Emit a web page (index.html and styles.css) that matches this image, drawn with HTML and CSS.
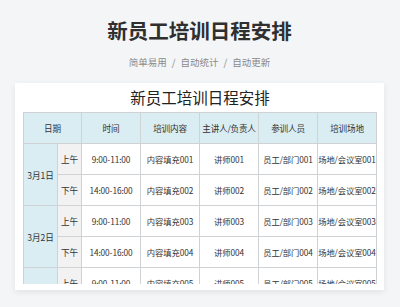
FILE: index.html
```html
<!DOCTYPE html>
<html lang="zh">
<head>
<meta charset="utf-8">
<link rel="stylesheet" href="styles.css">
</head>
<body>
<div class="page">
  <h1 class="title">新员工培训日程安排</h1>
  <p class="subtitle">简单易用<span class="sep">/</span>自动统计<span class="sep">/</span>自动更新</p>
  <div class="card">
    <div class="card-title">新员工培训日程安排</div>
    <div class="table-wrap">
      <table class="sheet">
        <colgroup>
          <col class="c-date"><col class="c-half"><col class="c-n"><col class="c-n"><col class="c-n"><col class="c-n"><col class="c-n">
        </colgroup>
        <thead>
          <tr><th colspan="2">日期</th><th>时间</th><th>培训内容</th><th>主讲人/负责人</th><th>参训人员</th><th>培训场地</th></tr>
        </thead>
        <tbody>
          <tr><td rowspan="2" class="date">3月1日</td><td class="half">上午</td><td>9:00-11:00</td><td>内容填充001</td><td>讲师001</td><td>员工/部门001</td><td>场地/会议室001</td></tr>
          <tr><td class="half">下午</td><td>14:00-16:00</td><td>内容填充002</td><td>讲师002</td><td>员工/部门002</td><td>场地/会议室002</td></tr>
          <tr><td rowspan="2" class="date">3月2日</td><td class="half">上午</td><td>9:00-11:00</td><td>内容填充003</td><td>讲师003</td><td>员工/部门003</td><td>场地/会议室003</td></tr>
          <tr><td class="half">下午</td><td>14:00-16:00</td><td>内容填充004</td><td>讲师004</td><td>员工/部门004</td><td>场地/会议室004</td></tr>
          <tr><td rowspan="2" class="date">3月3日</td><td class="half">上午</td><td>9:00-11:00</td><td>内容填充005</td><td>讲师005</td><td>员工/部门005</td><td>场地/会议室005</td></tr>
          <tr><td class="half">下午</td><td>14:00-16:00</td><td>内容填充006</td><td>讲师006</td><td>员工/部门006</td><td>场地/会议室006</td></tr>
        </tbody>
      </table>
    </div>
  </div>
</div>
</body>
</html>
```
FILE: styles.css
```css
html, body {
  margin: 0;
  padding: 0;
  background: #f4f5f7;
  font-family: "Noto Sans CJK SC", "Noto Sans", sans-serif;
  color: #333;
}
.page {
  width: 400px;
  height: 307px;
  overflow: hidden;
  padding: 15px 16px 0 15px;
  box-sizing: border-box;
}
.title {
  margin: 0;
  font-size: 20.5px;
  line-height: 30px;
  font-weight: 700;
  text-align: center;
  color: #2f2f2f;
}
.subtitle {
  margin: 9px 0 0;
  font-size: 9.5px;
  line-height: 16px;
  text-align: center;
  color: #8a8a8a;
}
.subtitle .sep {
  margin: 0 5px;
}
.card {
  margin-top: 13px;
  background: #fff;
  padding: 0 7px 6px 8px;
  box-shadow: 0 2px 6px rgba(0, 0, 0, 0.08);
}
.card-title {
  height: 29px;
  line-height: 28px;
  font-size: 15.5px;
  text-align: center;
  color: #222;
}
.table-wrap {
  height: 172px;
  overflow: hidden;
}
.sheet {
  width: 354px;
  border-collapse: collapse;
  table-layout: fixed;
  font-size: 8.3px;
  letter-spacing: -0.1px;
}
.c-date { width: 34px; }
.c-half { width: 24px; }
.c-n { width: 59px; }
.sheet th,
.sheet td {
  border: 1px solid #cfd3d6;
  height: 30px;
  padding: 0;
  text-align: center;
  white-space: nowrap;
  overflow: hidden;
  font-weight: 400;
  color: #333;
}
.sheet th {
  background: #daedf3;
  font-size: 8.6px;
  letter-spacing: -0.2px;
}
.sheet td.date {
  background: #daedf3;
  font-size: 8.6px;
}
.sheet td.half {
  background: #f2f2f2;
  font-size: 8.6px;
}
```
